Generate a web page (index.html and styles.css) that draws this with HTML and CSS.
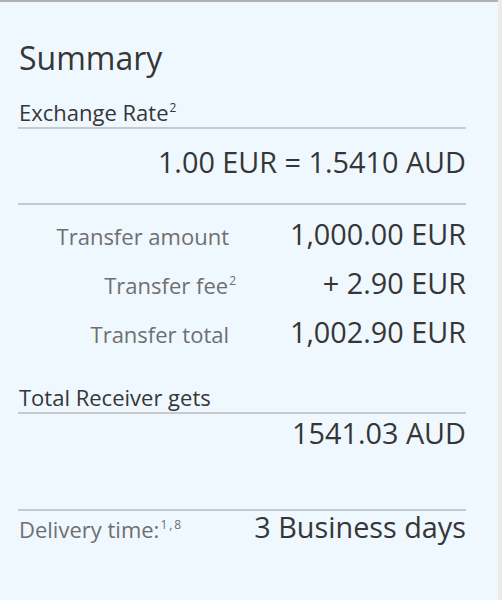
FILE: index.html
```html
<!DOCTYPE html>
<html lang="en">
<head>
<meta charset="utf-8">
<title>Summary</title>
<link rel="stylesheet" href="styles.css">
</head>
<body>
<div class="panel">
  <h1 class="title">Summary</h1>

  <h2 class="section-head">Exchange Rate<sup class="fn">2</sup></h2>
  <div class="rate">1.00 EUR = 1.5410 AUD</div>

  <div class="rows">
    <div class="label">Transfer amount</div>
    <div class="value">1,000.00 EUR</div>
    <div class="label">Transfer fee<sup class="fn fn-out">2</sup></div>
    <div class="value">+ 2.90 EUR</div>
    <div class="label">Transfer total</div>
    <div class="value">1,002.90 EUR</div>
  </div>

  <h2 class="section-head receiver-head">Total Receiver gets</h2>
  <div class="receiver">1541.03 AUD</div>

  <div class="delivery">
    <div class="delivery-label">Delivery time:<sup class="fn fn-wide">1,8</sup></div>
    <div class="delivery-value">3 Business days</div>
  </div>
</div>
</body>
</html>
```

FILE: styles.css
```css
html, body {
  margin: 0;
  padding: 0;
}

body {
  background: #ebebe8;
  font-family: "Open Sans", "DejaVu Sans", sans-serif;
  color: #363636;
}

.panel {
  width: 498px;
  height: 600px;
  box-sizing: border-box;
  background: #f0f8ff;
  border-top: 2px solid #b0b0b0;
  padding: 36px 32px 0 18px;
}

.title {
  margin: 0;
  font-size: 32px;
  line-height: 40px;
  font-weight: 400;
  padding-left: 1px;
}

.section-head {
  margin: 19px 0 0;
  font-size: 22px;
  line-height: 30px;
  font-weight: 400;
  padding-left: 1px;
  border-bottom: 2px solid #c9c9c9;
}

.fn {
  font-size: 12px;
  line-height: 0;
  vertical-align: 9px;
  margin-left: 1px;
  letter-spacing: 1px;
}

.fn-out {
  margin-right: -8px;
}

.fn-wide {
  letter-spacing: 2px;
}

.rate {
  margin-top: 15px;
  font-size: 28.8px;
  line-height: 36px;
  text-align: right;
  padding-bottom: 23px;
  border-bottom: 2px solid #c9c9c9;
}

.rows {
  display: grid;
  grid-template-columns: 211px 1fr;
  grid-auto-rows: 49px;
  padding-top: 4px;
  align-items: baseline;
}

.label {
  font-size: 22px;
  line-height: 44px;
  color: #6f6f6f;
  text-align: right;
}

.value {
  font-size: 28.8px;
  line-height: 49px;
  text-align: right;
}

.receiver-head {
  margin-top: 26px;
}

.receiver {
  margin-top: 1px;
  font-size: 28.8px;
  line-height: 36px;
  text-align: right;
}

.delivery {
  margin-top: 58px;
  border-top: 2px solid #c9c9c9;
  padding-top: 2px;
  display: flex;
  justify-content: space-between;
  align-items: baseline;
}

.delivery-label {
  font-size: 22px;
  line-height: 28px;
  color: #6f6f6f;
  padding-left: 1px;
}

.delivery-value {
  font-size: 28.8px;
  line-height: 28px;
}
```
